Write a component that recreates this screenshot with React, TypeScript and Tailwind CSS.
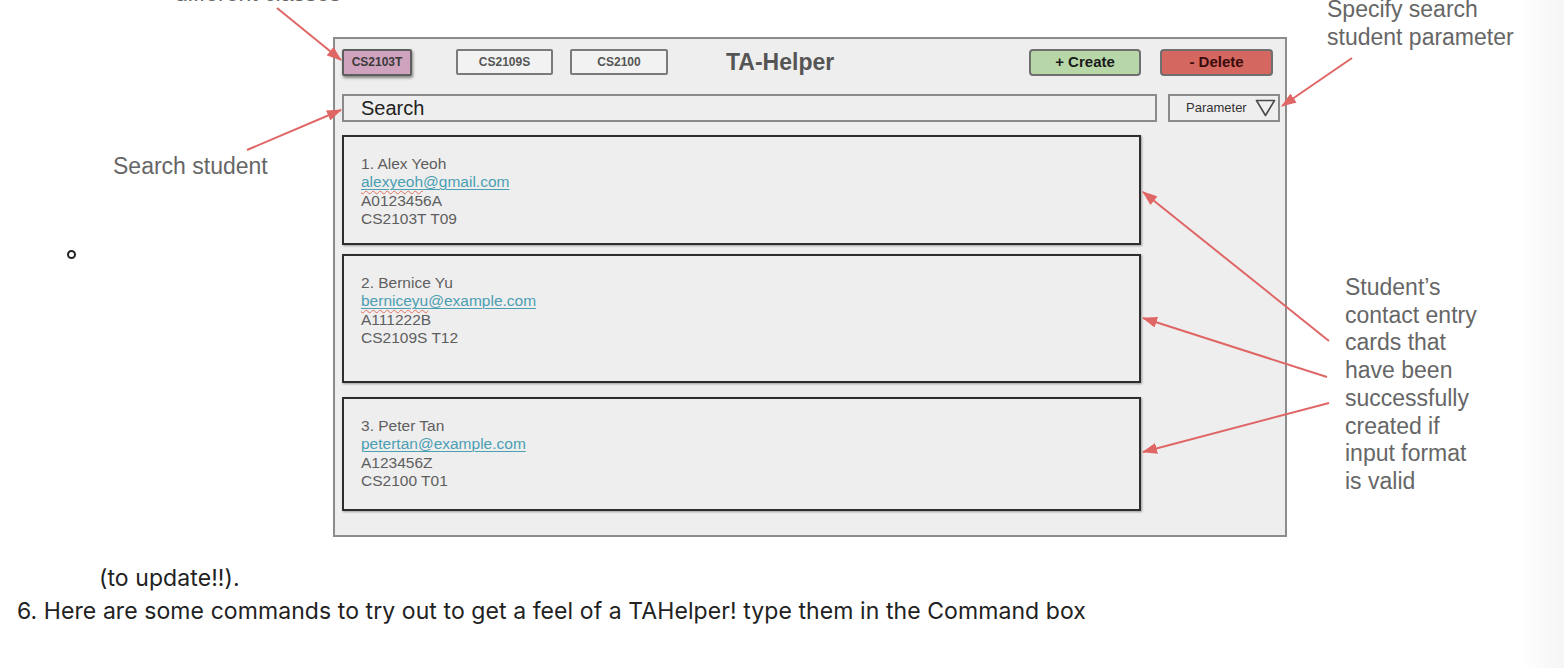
import React from 'react';

const RED = '#e06666';

interface Student {
  id: number;
  name: string;
  user: string;
  domain: string;
  wavy: boolean;
  matric: string;
  group: string;
  height: string;
  gap: string;
}

const students: Student[] = [
  { id: 1, name: 'Alex Yeoh', user: 'alexyeoh', domain: '@gmail.com', wavy: true, matric: 'A0123456A', group: 'CS2103T T09', height: 'h-[110px]', gap: 'mt-0' },
  { id: 2, name: 'Bernice Yu', user: 'berniceyu', domain: '@example.com', wavy: true, matric: 'A111222B', group: 'CS2109S T12', height: 'h-[129px]', gap: 'mt-[9px]' },
  { id: 3, name: 'Peter Tan', user: 'petertan', domain: '@example.com', wavy: false, matric: 'A123456Z', group: 'CS2100 T01', height: 'h-[114px]', gap: 'mt-[14px]' },
];

function StudentCard({ s }: { s: Student }) {
  return (
    <div
      className={`${s.height} ${s.gap} w-[799px] border-2 border-[#2e2e2e] bg-[#eeeeee] pl-[17px] pt-[18px] text-[15.5px] leading-[18.4px] text-[#5e5e5e] shadow-[1px_1px_2px_rgba(0,0,0,0.35)]`}
    >
      <div>
        {s.id}. {s.name}
      </div>
      <div className="text-[#4b9fb3] underline decoration-[#4b9fb3] decoration-1 underline-offset-[2px]">
        <span className={s.wavy ? 'underline decoration-wavy decoration-[#e0705f] decoration-1 underline-offset-[3px]' : ''}>{s.user}</span>
        {s.domain}
      </div>
      <div>{s.matric}</div>
      <div>{s.group}</div>
    </div>
  );
}

function Mockup() {
  return (
    <div className="ml-[333px] mt-[37px] flex h-[500px] w-[954px] flex-col border-2 border-[#8c8c8c] bg-[#eeeeee] pl-[7px] pt-[9px] font-['Liberation_Sans',Arial,sans-serif]">
      {/* top bar */}
      <div className="flex h-[28px] items-center pr-[12px]">
        <button className="flex h-[27px] w-[70px] items-center justify-center rounded-[2px] border-2 border-[#5e5e5e] bg-[#cfa3bd] text-[12px] font-bold text-[#3a3a3a] shadow-[1px_2px_3px_rgba(0,0,0,0.45)]">
          CS2103T
        </button>
        <button className="ml-[44px] flex h-[26px] w-[97px] items-center justify-center rounded-[2px] border-2 border-[#7a7a7a] bg-[#f2f2f2] text-[12px] font-bold text-[#555]">
          CS2109S
        </button>
        <button className="ml-[17px] flex h-[26px] w-[98px] items-center justify-center rounded-[2px] border-2 border-[#7a7a7a] bg-[#f2f2f2] text-[12px] font-bold text-[#555]">
          CS2100
        </button>
        <div className="ml-[58px] text-[23px] font-bold text-[#555]">TA-Helper</div>
        <button className="ml-auto flex h-[27px] w-[112px] items-center justify-center rounded-[4px] border-2 border-[#6f6f6f] bg-[#b7d7a8] text-[15px] font-bold text-[#1a1a1a]">
          + Create
        </button>
        <button className="ml-[19px] flex h-[27px] w-[113px] items-center justify-center rounded-[4px] border-2 border-[#6f6f6f] bg-[#d4675f] text-[15px] font-bold text-[#3a0b0b]">
          - Delete
        </button>
      </div>

      {/* search row */}
      <div className="mt-[18px] flex h-[28px] items-center">
        <div className="flex h-[28px] w-[815px] items-center border-2 border-[#8a8a8a] bg-[#eeeeee] pl-[17px] text-[20px] text-[#222]">
          Search
        </div>
        <div className="ml-[11px] flex h-[28px] w-[112px] items-center border-2 border-[#8a8a8a] bg-[#eeeeee] pl-[16px] pr-[2px] text-[13px] text-[#333]">
          <span>Parameter</span>
          <svg className="ml-auto" width="21" height="18" viewBox="0 0 21 18">
            <path d="M1.5 1.5 L19.5 1.5 L10.5 16.5 Z" fill="none" stroke="#4a4a4a" strokeWidth="1.6" strokeLinejoin="round" />
          </svg>
        </div>
      </div>

      {/* cards */}
      <div className="mt-[13px] flex flex-col">
        {students.map(s => (
          <StudentCard key={s.id} s={s} />
        ))}
      </div>
    </div>
  );
}

function Arrows() {
  const lines: [number, number, number, number][] = [
    [277, 8, 341, 60],
    [247, 150, 341, 110],
    [1352, 58, 1282, 106],
    [1329, 341, 1143, 192],
    [1327, 377, 1143, 318],
    [1329, 403, 1143, 452],
  ];
  return (
    <svg className="pointer-events-none absolute left-0 top-0" width="1520" height="562">
      <defs>
        <marker id="ah" markerWidth="15" markerHeight="11" refX="14" refY="5.5" orient="auto" markerUnits="userSpaceOnUse">
          <path d="M0,0 L15,5.5 L0,11 z" fill={RED} />
        </marker>
      </defs>
      {lines.map(([x1, y1, x2, y2], i) => (
        <line key={i} x1={x1} y1={y1} x2={x2} y2={y2} stroke={RED} strokeWidth="2" markerEnd="url(#ah)" />
      ))}
    </svg>
  );
}

export default function App() {
  return (
    <div className="flex h-[668px] w-full overflow-hidden bg-white">
      <div className="flex flex-1 flex-col">
        <div className="relative h-[562px] shrink-0">
          {/* annotations on the figure */}
          <div className="absolute left-[175px] top-[-21px] font-['Liberation_Sans',Arial,sans-serif] text-[23px] leading-[28px] text-[#666]">
            different classes
          </div>
          <div className="absolute left-[113px] top-[152px] font-['Liberation_Sans',Arial,sans-serif] text-[23px] leading-[28px] text-[#666]">
            Search student
          </div>
          <div className="absolute left-[1327px] top-[-5px] font-['Liberation_Sans',Arial,sans-serif] text-[23px] leading-[28px] text-[#666]">
            Specify search
            <br />
            student parameter
          </div>
          <div className="absolute left-[1345px] top-[274px] font-['Liberation_Sans',Arial,sans-serif] text-[23px] leading-[27.7px] text-[#666]">
            Student’s
            <br />
            contact entry
            <br />
            cards that
            <br />
            have been
            <br />
            successfully
            <br />
            created if
            <br />
            input format
            <br />
            is valid
          </div>
          <div className="absolute left-[67px] top-[250px] h-[9px] w-[9px] rounded-full border-2 border-[#222]" />

          <Mockup />
          <Arrows />
        </div>

        <div className="font-['Inter',sans-serif] text-[23px] leading-[33px] tracking-[0.08px] text-[#222]">
          <p className="pl-[99px]">(to update!!).</p>
          <p className="pl-[17px]">6. Here are some commands to try out to get a feel of a TAHelper! type them in the Command box</p>
        </div>
      </div>
      <div className="w-[44px] shrink-0 bg-linear-to-r from-white to-[#f5f5f5]" />
    </div>
  );
}
